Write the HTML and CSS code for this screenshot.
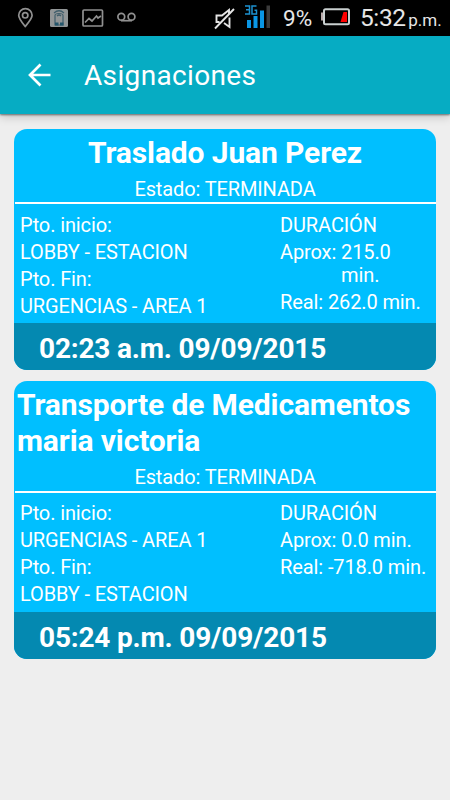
FILE: index.html
```
<!DOCTYPE html>
<html lang="es">
    <head>
        <meta charset="utf-8">
        <meta name="viewport" content="width=device-width, initial-scale=1">
        <title>Asignaciones</title>
        <link rel="stylesheet" href="styles.css">
    </head>
    <body>
        <div class="status">
            <svg class="notifications" width="140" height="36" viewBox="0 0 140 36" fill="none" stroke="#909090" stroke-width="1.7">
                <path d="M25.200 26.500C21 21.500 18.700 18.500 18.700 15.300a6.700 6.700 0 0 1 13.400 0C32.100 18.500 29.400 21.500 25.200 26.500z"/>
                <circle cx="25.200" cy="15.300" r="2.700"/>
                <rect x="50" y="9" width="18" height="18" rx="1.500" fill="#929697" stroke="none"/>
                <path d="M55 25V15.500q0-2 4-2t4 2V25zM54 13q5-4.500 10 0M57 16q2-2 4 0" stroke="#405e6b" stroke-width="1.200"/>
                <path d="M55 24h3.500M60 24h3.500" stroke="#24566c" stroke-width="3"/>
                <rect x="83" y="10" width="19.500" height="16" rx="1"/>
                <path d="M85 22.500l4-4 3 2.500 4.500-5 1.500 2 3-2"/>
                <circle cx="121.300" cy="16.800" r="3.400"/>
                <circle cx="131.500" cy="16.800" r="3.400"/>
                <path d="M121 20.700h11"/>
            </svg>
            <div class="system">
                <svg width="24" height="36" viewBox="0 0 24 36" fill="none" stroke="#e4e4e4" stroke-width="1.900">
                    <path d="M6.500 22H3.500v-6.500H9l7-5.500v3.500M16.500 17.500V27L11 23M2 28.500L21 9"/>
                </svg>
                <svg class="signal" width="27" height="36" viewBox="0 0 27 36">
                    <path d="M3 20h4v8H3zM9.500 16h4v12h-4zM16 10.500h4V28h-4z" fill="#0a96e4"/>
                    <path d="M22.500 5.500H26V28h-3.500z" fill="#3b3b3b"/>
                    <path d="M1 6h4.500v8H1M2 9.800h3.500M12.500 6H8v8h4.500v-3.700h-2" fill="none" stroke="#1d91cf" stroke-width="1.500"/>
                </svg>
                <span class="percent">9%</span>
                <svg class="battery" width="30" height="36" viewBox="0 0 30 36">
                    <path d="M0 12.500h2v8H0z" fill="#b9aaaa"/>
                    <rect x="3" y="9.300" width="25" height="15" rx="1.500" fill="none" stroke="#c9cfcf" stroke-width="2"/>
                    <path d="M22.500 12H26v10h-6.500z" fill="#f00"/>
                </svg>
                <span class="clock">5:32 <small>p.m.</small></span>
            </div>
        </div>

        <div class="toolbar">
            <svg width="24" height="24" viewBox="0 0 24 24" fill="none" stroke="#fff" stroke-width="2.700">
                <path d="M23.500 12H3.500M13.500 1.500L3 12l10.500 10.500"/>
            </svg>
            <h1>Asignaciones</h1>
        </div>

        <div class="list">
            <div class="card">
                <div class="head">
                    <h2>Traslado Juan Perez</h2>
                    <p>Estado: TERMINADA</p>
                </div>
                <div class="info">
                    <div class="place">
                        <p>Pto. inicio:</p>
                        <p>LOBBY - ESTACION</p>
                        <p>Pto. Fin:</p>
                        <p>URGENCIAS - AREA 1</p>
                    </div>
                    <div class="time">
                        <p>DURACIÓN</p>
                        <p class="row"><span>Aprox:</span><span>215.0<br>min.</span></p>
                        <p class="row"><span>Real:</span><span>262.0 min.</span></p>
                    </div>
                </div>
                <div class="date">02:23 a.m. 09/09/2015</div>
            </div>

            <div class="card">
                <div class="head">
                    <h2>Transporte de Medicamentos maria victoria</h2>
                    <p>Estado: TERMINADA</p>
                </div>
                <div class="info">
                    <div class="place">
                        <p>Pto. inicio:</p>
                        <p>URGENCIAS - AREA 1</p>
                        <p>Pto. Fin:</p>
                        <p>LOBBY - ESTACION</p>
                    </div>
                    <div class="time">
                        <p>DURACIÓN</p>
                        <p class="row"><span>Aprox:</span><span>0.0 min.</span></p>
                        <p class="row"><span>Real:</span><span>-718.0 min.</span></p>
                    </div>
                </div>
                <div class="date">05:24 p.m. 09/09/2015</div>
            </div>
        </div>
    </body>
</html>
```
FILE: styles.css
```
html, body { height: 100%; margin: 0; padding: 0; overflow: hidden;
             background-color: #eee; color: white; font-family: Roboto, sans-serif; }
h1, h2, p { margin: 0; }
svg { display: block; flex: none; }
.status {
    display: flex;
    justify-content: space-between;
    height: 35.5px;
    background-color: #000;
}
.system {
    display: flex;
    align-items: center;
    width: 237px;
    color: #e6e6e6;
    white-space: nowrap;
}
.signal { margin-left: 7px; }
.percent { margin-left: 12px; width: 38px; padding-top: 1px; font-size: 22.5px; }
.clock { margin-left: 9px; font-size: 24.5px; letter-spacing: -.4px; }
.clock small { margin-left: -3px; font-size: 17px; letter-spacing: 0; }
.toolbar {
    position: relative;
    display: flex;
    align-items: center;
    height: 78.5px;
    padding-left: 27px;
    background-color: #06acc3;
    box-shadow: 0 1px 2px rgba(0,0,0,.5), 0 3px 9px rgba(0,0,0,.18);
}
h1 { margin-left: 33px; padding-top: 1px; font-size: 28px; font-weight: normal; letter-spacing: .35px; }
.list {
    display: flex;
    flex-direction: column;
    gap: 11px;
    padding: 14.5px 14px;
}
.card {
    overflow: hidden;
    border-radius: 13px;
    background-color: #00bfff;
    font-size: 20px;
    line-height: 23px;
    letter-spacing: -.12px;
}
.head {
    display: flex;
    flex-direction: column;
    align-items: center;
    gap: 7px;
    margin-left: 1px;
    padding: 6px 3px 1.5px 2px;
    border-bottom: 2px solid #fff;
}
h2 { font-size: 30px; line-height: 36px; }
.info {
    display: flex;
    padding: 9.5px 6px 1.5px;
}
.place { width: 260px; }
.info p { margin-bottom: 4px; white-space: nowrap; }
.row { display: flex; gap: 5px; }
.date {
    height: 47px;
    padding-left: 25px;
    background-color: #0489b1;
    font-size: 28px;
    font-weight: bold;
    line-height: 52px;
    letter-spacing: -.18px;
}
```
